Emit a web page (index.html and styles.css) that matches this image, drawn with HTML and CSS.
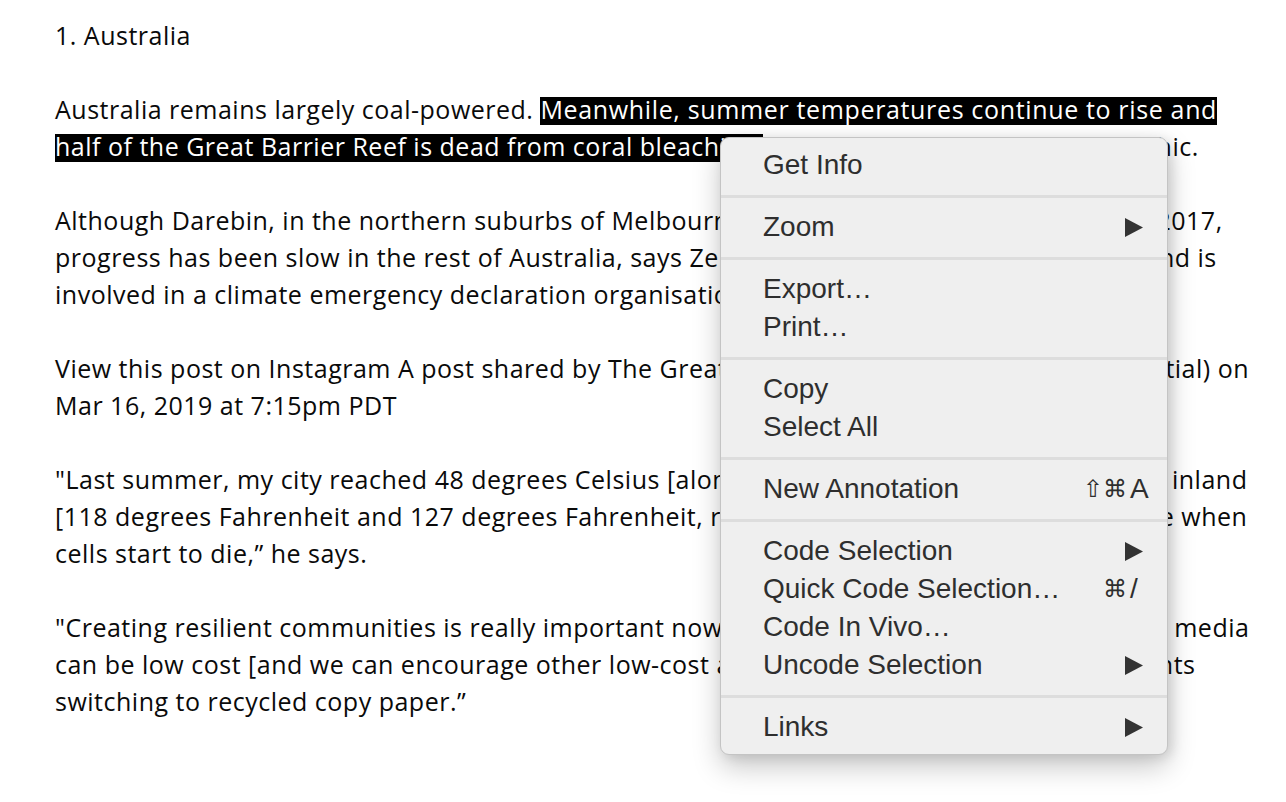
FILE: index.html
```html
<!DOCTYPE html>
<html>
<head>
<meta charset="utf-8">
<link rel="stylesheet" href="styles.css">
</head>
<body>
<main class="doc">
  <p>1. Australia</p>
  <p>Australia remains largely coal-powered. <span class="sel sel-wide">Meanwhile, summer temperatures continue to rise and</span><br><span class="sel">half of the Great Barrier Reef is dead from coral bleaching,</span><span class="spaced"> according to National Geographic.</span></p>
  <p>Although Darebin, in the northern suburbs of Melbourne, declared a climate emergency in 2017,<br>progress has been slow in the rest of Australia, says Zen Smith, who works for the council and is<br>involved in a climate emergency declaration organisation.</p>
  <p>View this post on Instagram A post shared by The Great Barrier Reef (@greatbarrierreef_partial) on<br>Mar 16, 2019 at 7:15pm PDT</p>
  <p>"Last summer, my city reached 48 degrees Celsius [along with 53.5 degrees Celsius in towns inland<br>[118 degrees Fahrenheit and 127 degrees Fahrenheit, respectively] which is the temperature when<br>cells start to die,” he says.</p>
  <p>"Creating resilient communities is really important now, and a campaign sent through social media<br>can be low cost [and we can encourage other low-cost actions, such as getting all our students<br>switching to recycled copy paper.”</p>
</main>

<nav class="menu">
  <div class="group">
    <div class="item"><span class="label">Get Info</span></div>
  </div>
  <div class="group">
    <div class="item"><span class="label">Zoom</span><svg class="arrow" viewBox="0 0 18 19"><polygon points="0,0 18,9.5 0,19"/></svg></div>
  </div>
  <div class="group">
    <div class="item"><span class="label">Export…</span></div>
    <div class="item"><span class="label">Print…</span></div>
  </div>
  <div class="group">
    <div class="item"><span class="label">Copy</span></div>
    <div class="item"><span class="label">Select All</span></div>
  </div>
  <div class="group">
    <div class="item"><span class="label">New Annotation</span><span class="keys"><span class="mods">⇧⌘</span><span class="key">A</span></span></div>
  </div>
  <div class="group">
    <div class="item"><span class="label">Code Selection</span><svg class="arrow" viewBox="0 0 18 19"><polygon points="0,0 18,9.5 0,19"/></svg></div>
    <div class="item"><span class="label">Quick Code Selection…</span><span class="keys"><span class="mods">⌘</span><span class="key">/</span></span></div>
    <div class="item"><span class="label">Code In Vivo…</span></div>
    <div class="item"><span class="label">Uncode Selection</span><svg class="arrow" viewBox="0 0 18 19"><polygon points="0,0 18,9.5 0,19"/></svg></div>
  </div>
  <div class="group">
    <div class="item"><span class="label">Links</span><svg class="arrow" viewBox="0 0 18 19"><polygon points="0,0 18,9.5 0,19"/></svg></div>
  </div>
</nav>
</body>
</html>
```

FILE: styles.css
```css
html, body {
  margin: 0;
  padding: 0;
  background: #ffffff;
}

body {
  width: 1286px;
  height: 802px;
  overflow: hidden;
  position: relative;
}

.doc {
  padding: 17px 0 0 55px;
  font-family: "Open Sans", "Noto Sans", sans-serif;
  font-size: 25px;
  line-height: 37px;
  color: #0a0a0a;
  white-space: nowrap;
  letter-spacing: 0.5px;
}

.doc p {
  margin: 0 0 37px 0;
}

.sel {
  color: #ffffff;
  background-image: linear-gradient(#000000, #000000);
  background-repeat: no-repeat;
  background-size: 100% 28px;
  background-position: 0 5px;
}

.sel-wide {
  letter-spacing: 0.65px;
}

.spaced {
  word-spacing: 4px;
}

.menu {
  position: absolute;
  left: 720px;
  top: 137px;
  width: 446px;
  padding: 8px 0;
  background: #efefef;
  border: 1px solid #c4c4c4;
  border-radius: 9px;
  box-shadow: 0 12px 28px rgba(0, 0, 0, 0.22), 4px 2px 12px rgba(0, 0, 0, 0.10);
  font-family: "Liberation Sans", Arial, "DejaVu Sans", sans-serif;
  font-size: 28px;
  color: #2e2e2e;
  display: flex;
  flex-direction: column;
}

.group {
  display: flex;
  flex-direction: column;
}

.group + .group {
  margin-top: 11px;
  padding-top: 10px;
  border-top: 3px solid #dddddd;
}

.item {
  height: 38px;
  display: flex;
  align-items: center;
  padding: 0 24px 0 42px;
}

.label {
  flex: 1;
}

.arrow {
  width: 18px;
  height: 19px;
  fill: #333333;
}

.keys {
  display: flex;
  align-items: center;
  margin-right: -9px;
}

.mods {
  font-family: "DejaVu Sans", sans-serif;
  font-size: 24px;
  text-align: right;
}

.key {
  width: 22px;
  margin-left: 3px;
  text-align: left;
}
```
